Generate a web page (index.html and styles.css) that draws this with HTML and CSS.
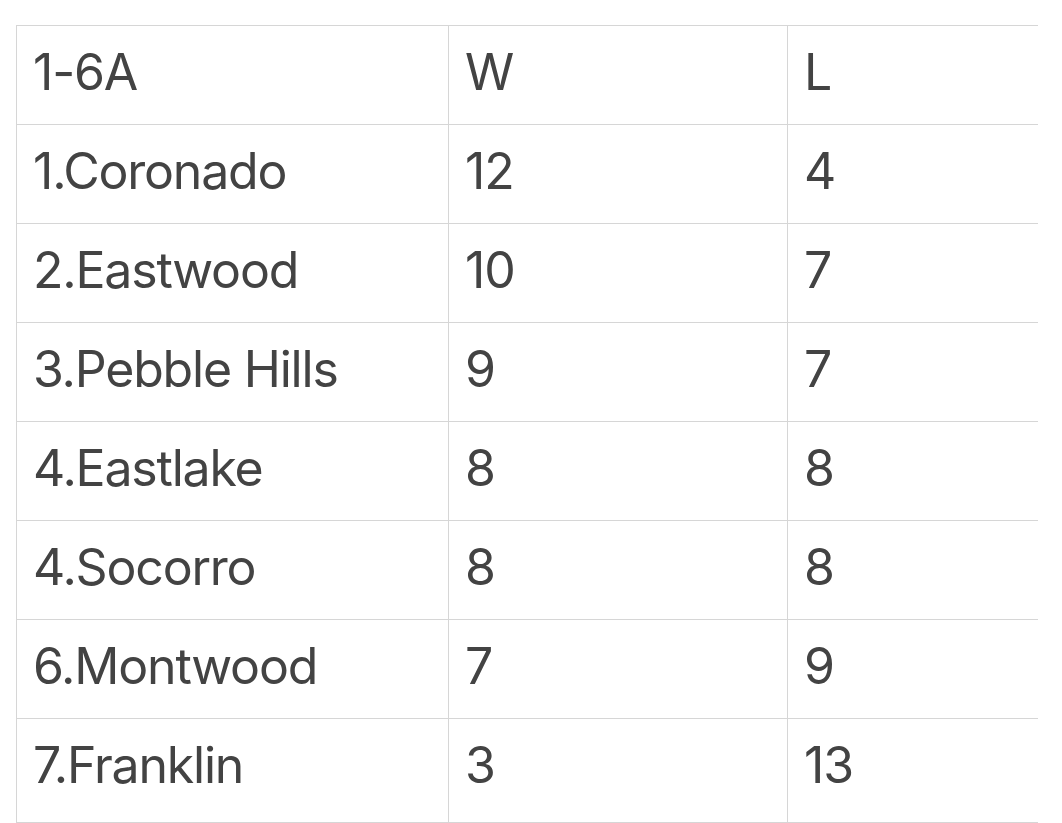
FILE: index.html
```html
<!DOCTYPE html>
<html>
<head>
<meta charset="utf-8">
<link rel="stylesheet" href="styles.css">
</head>
<body>
<table class="standings">
  <colgroup>
    <col class="c-team"><col class="c-w"><col class="c-l">
  </colgroup>
  <tr><td>1-6A</td><td>W</td><td>L</td></tr>
  <tr><td>1.Coronado</td><td>12</td><td>4</td></tr>
  <tr><td>2.Eastwood</td><td>10</td><td>7</td></tr>
  <tr><td>3.Pebble Hills</td><td>9</td><td>7</td></tr>
  <tr><td>4.Eastlake</td><td>8</td><td>8</td></tr>
  <tr><td>4.Socorro</td><td>8</td><td>8</td></tr>
  <tr><td>6.Montwood</td><td>7</td><td>9</td></tr>
  <tr class="last"><td>7.Franklin</td><td>3</td><td>13</td></tr>
</table>
</body>
</html>
```

FILE: styles.css
```css
html, body {
  margin: 0;
  background: #ffffff;
}
body {
  padding: 25px 0 0 16px;
  font-family: Inter, "Noto Sans", sans-serif;
  color: #434343;
}
.standings {
  border-collapse: collapse;
  width: 1021px;
  table-layout: fixed;
}
.c-team { width: 432px; }
.c-w { width: 339px; }
.c-l { width: 250px; }
.standings td {
  height: 99px;
  padding: 0 0 7px 16px;
  box-sizing: border-box;
  border-top: 1px solid #d6d6d6;
  border-bottom: 1px solid #d6d6d6;
  border-left: 1px solid #d6d6d6;
  font-size: 50px;
  font-weight: 400;
  letter-spacing: -1.2px;
  line-height: 1;
  vertical-align: middle;
  white-space: nowrap;
}
.standings .last td {
  height: 104px;
  padding-bottom: 12px;
}
```
